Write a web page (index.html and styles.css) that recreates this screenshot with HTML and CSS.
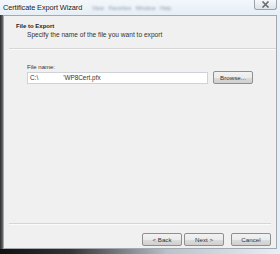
FILE: index.html
```html
<!DOCTYPE html>
<html lang="en">
<head>
    <meta charset="UTF-8">
    <title>Certificate Export Wizard</title>
    <link rel="stylesheet" href="styles.css">
</head>
<body>
    <div class="window">
        <div class="titlebar">
            <span class="title">Certificate Export Wizard</span>
            <span class="behind">View &nbsp; Favorites &nbsp; Window &nbsp; Help</span>
            <span class="close">
                <svg width="9" height="7" viewBox="0 0 9 7"><path d="M1.5 0.5 L7.5 6.5 M7.5 0.5 L1.5 6.5" stroke="#6b6b6b" stroke-width="1.6"/></svg>
            </span>
        </div>
        <div class="client">
            <div class="header">
                <div class="heading">File to Export</div>
                <div class="subheading">Specify the name of the file you want to export</div>
            </div>
            <div class="rule rule-top"></div>
            <div class="body">
                <label class="field-label">File name:</label>
                <div class="field-row">
                    <div class="textbox"><span>C:\</span><span class="gap"></span><span>'WP8Cert.pfx</span></div>
                    <button class="btn browse">Browse...</button>
                </div>
            </div>
            <div class="rule rule-bottom"></div>
            <div class="buttons">
                <button class="btn">&lt; Back</button>
                <button class="btn">Next &gt;</button>
                <button class="btn cancel">Cancel</button>
            </div>
        </div>
        <div class="bottom-frame"></div>
    </div>
</body>
</html>
```

FILE: styles.css
```css
/* Page */
body {
    margin: 0;
    background: #1e1e1e;
    font-family: "Liberation Sans", Arial, sans-serif;
}

/* Window frame */
.window {
    width: 280px;
    height: 254px;
    display: flex;
    flex-direction: column;
    background: linear-gradient(to right, #2b2b2b 0px, #6a6f74 3px, #dfe8f0 6px, #eef4fa 60%, #e2f0fb 100%);
    overflow: hidden;
}

/* Title bar */
.titlebar {
    height: 15px;
    display: flex;
    align-items: center;
    position: relative;
    background: linear-gradient(to bottom, #f3f7fb, #e6eef6);
}

.title {
    margin-left: 3px;
    margin-top: -1px;
    font-size: 7.4px;
    color: #1a1a1a;
    text-shadow: 0 0 3px #fff, 0 0 5px #fff;
    letter-spacing: -0.1px;
}

.behind {
    margin-left: 10px;
    margin-top: 1px;
    font-size: 5.5px;
    color: #8a98a8;
    filter: blur(1px);
    white-space: nowrap;
}

.close {
    position: absolute;
    top: 0;
    right: 3px;
    width: 23px;
    height: 10px;
    display: flex;
    align-items: center;
    justify-content: center;
    border: 1px solid #9aa2ab;
    border-top: none;
    border-radius: 0 0 3px 3px;
    background: linear-gradient(to bottom, #f6f8fa, #dde3ea);
    box-sizing: border-box;
}

/* Client area */
.client {
    height: 234px;
    margin: 0 3px 0 3px;
    border: 1px solid #a3a9af;
    background: #f0f0f0;
    display: flex;
    flex-direction: column;
    box-sizing: border-box;
}

.header {
    height: 32px;
    padding-left: 12px;
    padding-top: 7px;
    box-sizing: border-box;
}

.heading {
    font-size: 6px;
    font-weight: bold;
    color: #1c1c1c;
}

.subheading {
    margin-top: 2px;
    margin-left: 11px;
    font-size: 6.6px;
    color: #333;
}

/* Etched separators */
.rule {
    height: 1px;
    background: #d6d6d6;
    border-bottom: 1px solid #fafafa;
    margin-left: 5px;
}

.rule-bottom {
    margin-right: 5px;
}

/* Body */
.body {
    flex: 1;
    padding: 14px 0 0 23px;
}

.field-label {
    display: block;
    font-size: 6px;
    color: #333;
    margin-bottom: 1px;
}

.field-row {
    display: flex;
    align-items: center;
}

.textbox {
    width: 181px;
    height: 12px;
    background: #fff;
    border: 1px solid #cfd2d6;
    box-sizing: border-box;
    display: flex;
    align-items: center;
    padding-left: 2px;
    font-size: 6.4px;
    color: #333;
}

.gap {
    width: 25px;
}

/* Buttons */
.btn {
    width: 40px;
    height: 13px;
    padding: 0;
    border: 1px solid #8e8f8f;
    border-radius: 2px;
    background: linear-gradient(to bottom, #f2f2f2 0%, #ebebeb 50%, #dddddd 51%, #cfcfcf 100%);
    font-family: "Liberation Sans", Arial, sans-serif;
    font-size: 6.2px;
    color: #333;
    box-sizing: border-box;
}

.browse {
    margin-left: 5px;
}

.buttons {
    height: 23px;
    display: flex;
    justify-content: flex-end;
    align-items: flex-start;
    padding: 8px 5px 0 0;
    gap: 2px;
    box-sizing: border-box;
}

.cancel {
    margin-left: 5px;
}

.bottom-frame {
    flex: 1;
    background: linear-gradient(to right, #111 0%, #333 25%, #b9c3cc 60%, #e6f0f8 100%);
}
```
